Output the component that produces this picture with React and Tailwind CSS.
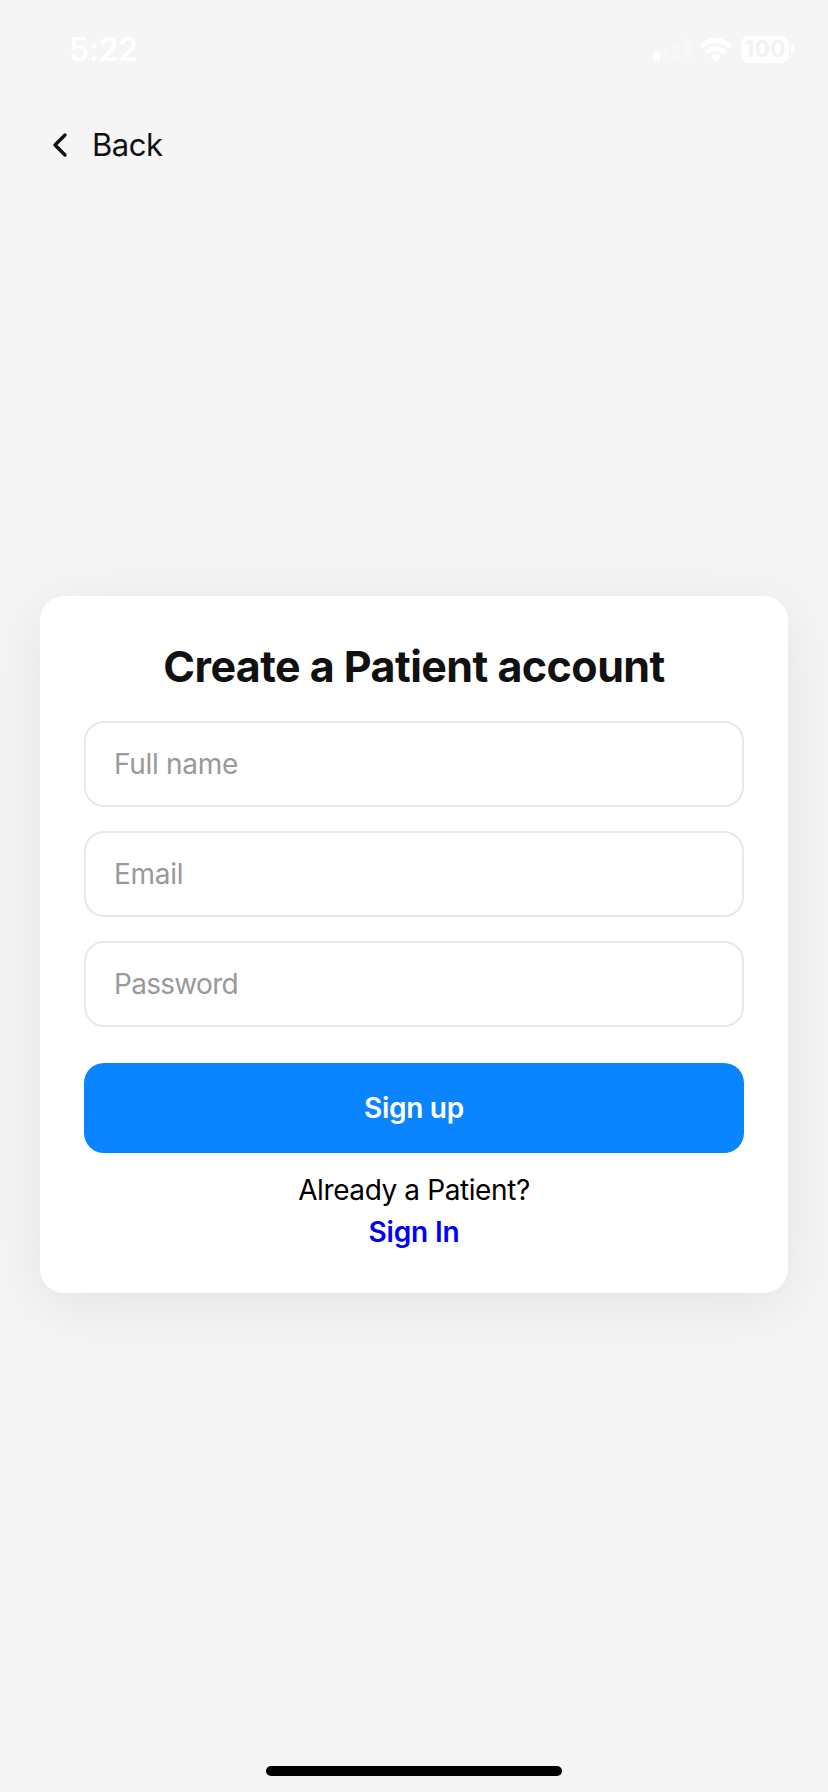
import React from 'react'

const FIELDS = [
  { name: 'fullName', type: 'text', placeholder: 'Full name', tracking: 'tracking-[-0.3px]' },
  { name: 'email', type: 'email', placeholder: 'Email', tracking: 'tracking-[-0.3px]' },
  { name: 'password', type: 'password', placeholder: 'Password', tracking: 'tracking-[-0.7px]' },
]

function StatusBar() {
  return (
    <div className="flex h-[100px] items-start justify-between pl-[69px] pr-[34px] text-white">
      <span className="mt-[30px] text-[32px] leading-10 font-semibold tracking-[-0.4px]">5:22</span>
      <div className="mt-9 flex items-start">
        <svg width="38" height="27" viewBox="0 0 38 27" fill="currentColor">
          <rect x="0" y="16" width="7" height="9" rx="2" />
          <rect x="10" y="12" width="7" height="13" rx="2" opacity="0.25" />
          <rect x="20" y="7" width="7" height="18" rx="2" opacity="0.25" />
          <rect x="30" y="2" width="7" height="23" rx="2" opacity="0.25" />
        </svg>
        <svg className="ml-2" width="33" height="27" viewBox="0 0 33 27" fill="currentColor">
          <path d="M16.5 2C22.7 2 28.3 4.4 32.3 8.2a.8.8 0 0 1 0 1.200L30 11.700a.8.8 0 0 1-1.200 0A18 18 0 0 0 4.200 11.700a.8.8 0 0 1-1.200 0L.7 9.400a.8.8 0 0 1 0-1.200C4.700 4.400 10.300 2 16.500 2Z" />
          <path d="M16.5 10c4 0 7.600 1.500 10.300 4a.8.8 0 0 1 0 1.200l-2.300 2.300a.8.8 0 0 1-1.200 0 10 10 0 0 0-13.600 0 .8.800 0 0 1-1.200 0L6.200 15.200a.8.8 0 0 1 0-1.200c2.700-2.500 6.300-4 10.300-4Z" />
          <path d="M16.5 18c1.900 0 3.600.7 4.900 1.800a.8.8 0 0 1 0 1.200l-4.300 4.100a.8.8 0 0 1-1.200 0L11.600 21a.8.8 0 0 1 0-1.200A7.400 7.400 0 0 1 16.500 18Z" />
        </svg>
        <div className="ml-[9px] flex h-[27px] w-12 items-center justify-center rounded-lg bg-white text-[23px] leading-none font-bold text-[#f2f2f2]">
          100
        </div>
        <div className="mt-[9px] ml-0.5 h-[9px] w-[3px] rounded-r-full bg-white" />
      </div>
    </div>
  )
}

export default function App() {
  return (
    <div className="flex h-[1792px] w-[828px] flex-col bg-[#f5f5f5] font-['Inter',sans-serif]">
      <StatusBar />

      <button className="ml-[52px] flex h-[90px] w-fit items-center text-[#111]">
        <svg width="16" height="26" viewBox="0 0 16 26" fill="none" stroke="currentColor" strokeWidth="3.4" strokeLinecap="round" strokeLinejoin="round">
          <path d="M13 3 3 13l10 10" />
        </svg>
        <span className="ml-6 text-[31px] leading-10 tracking-[-0.5px]">Back</span>
      </button>

      <main className="mx-10 mt-[406px] flex h-[697px] flex-col rounded-3xl bg-white px-11 pt-11 shadow-[0_12px_60px_rgba(0,0,0,0.08)]">
        <h1 className="text-center text-[43px] leading-[53px] font-bold tracking-[-0.55px] text-[#111]">
          Create a Patient account
        </h1>
        <form className="mt-7 flex flex-col">
          <div className="flex flex-col gap-6">
            {FIELDS.map(f => (
              <input
                key={f.name}
                type={f.type}
                placeholder={f.placeholder}
                className={`h-[86px] rounded-[20px] border-2 border-[#e5e9ef] px-7 text-[28px] placeholder:text-[#999] ${f.tracking}`}
              />
            ))}
          </div>
          <button type="button" className="mt-9 h-[90px] rounded-[20px] bg-[#0a84ff] text-[28px] font-semibold tracking-[-0.3px] text-white">
            Sign up
          </button>
        </form>
        <p className="mt-5 text-center text-[28px] leading-[34px] tracking-[-0.4px] text-black">Already a Patient?</p>
        <a className="mt-2 text-center text-[28px] leading-[34px] font-semibold tracking-[-0.15px] text-[#0000ff]">Sign In</a>
      </main>

      <div className="mx-auto mt-auto mb-4 h-2.5 w-[296px] rounded-full bg-black" />
    </div>
  )
}
